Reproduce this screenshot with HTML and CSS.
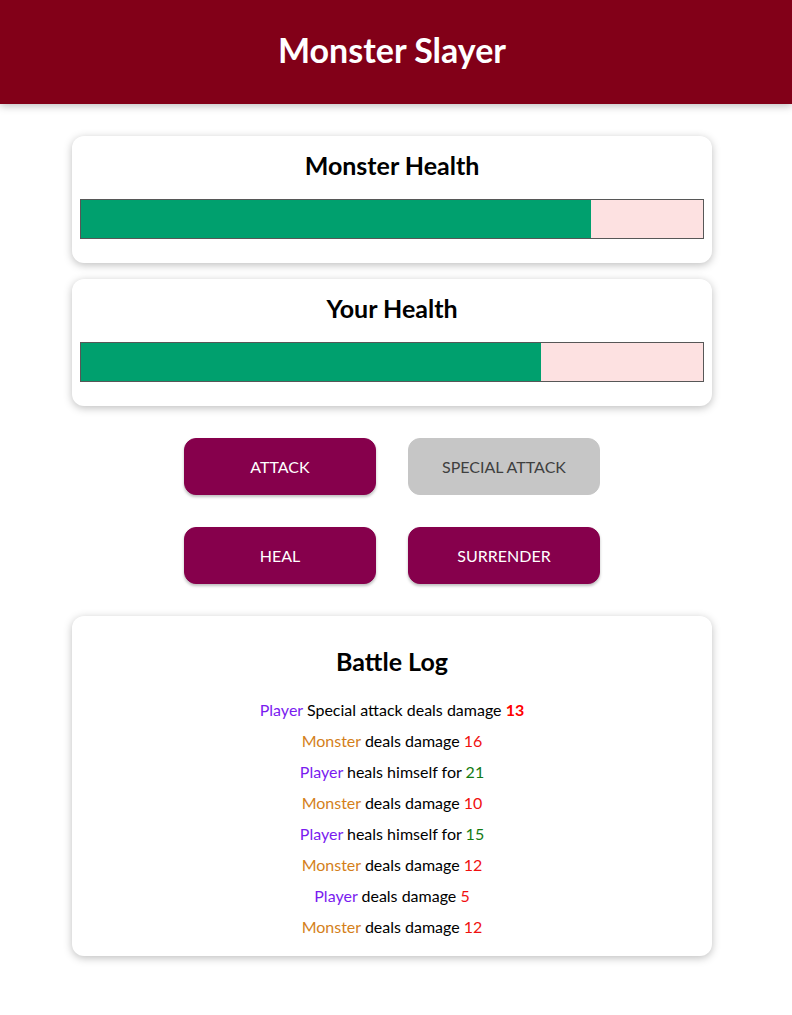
FILE: index.html
```html
<!DOCTYPE html>
<html lang="en">
<head>
<meta charset="utf-8">
<title>Monster Slayer</title>
<link rel="stylesheet" href="styles.css">
</head>
<body>
<header class="app-header">
  <h1 class="app-title">Monster Slayer</h1>
</header>
<main class="app-main">
  <section class="card">
    <h2 class="card-title">Monster Health</h2>
    <div class="healthbar"><div class="healthbar-value" style="width: 82%"></div></div>
  </section>
  <section class="card">
    <h2 class="card-title">Your Health</h2>
    <div class="healthbar"><div class="healthbar-value" style="width: 74%"></div></div>
  </section>
  <section class="controls">
    <button class="btn">ATTACK</button>
    <button class="btn" disabled>SPECIAL ATTACK</button>
    <button class="btn">HEAL</button>
    <button class="btn">SURRENDER</button>
  </section>
  <section class="card log-card">
    <h2 class="card-title log-title">Battle Log</h2>
    <ul class="log">
      <li><span class="log-player">Player</span> Special attack deals damage <span class="log-damage log-strong">13</span></li>
      <li><span class="log-monster">Monster</span> deals damage <span class="log-damage">16</span></li>
      <li><span class="log-player">Player</span> heals himself for <span class="log-heal">21</span></li>
      <li><span class="log-monster">Monster</span> deals damage <span class="log-damage">10</span></li>
      <li><span class="log-player">Player</span> heals himself for <span class="log-heal">15</span></li>
      <li><span class="log-monster">Monster</span> deals damage <span class="log-damage">12</span></li>
      <li><span class="log-player">Player</span> deals damage <span class="log-damage">5</span></li>
      <li><span class="log-monster">Monster</span> deals damage <span class="log-damage">12</span></li>
    </ul>
  </section>
</main>
</body>
</html>
```

FILE: styles.css
```css
* { box-sizing: border-box; }

html { font-family: "Lato", "Noto Sans", sans-serif; }

body {
  margin: 0;
  font-size: 16px;
  color: #000;
  background: #fff;
}

.app-header {
  background: #820018;
  color: #fff;
  text-align: center;
  padding: 30px 8px 34px 0;
  box-shadow: 0 2px 8px rgba(0, 0, 0, 0.26);
  margin-bottom: 32px;
}

.app-title {
  margin: 0;
  font-size: 34px;
  line-height: 40px;
  font-weight: 700;
}

.app-main {
  padding-right: 8px;
}

.card {
  width: 640px;
  margin: 16px auto;
  padding: 8px;
  border-radius: 12px;
  background: #fff;
  box-shadow: 0 2px 8px rgba(0, 0, 0, 0.26);
  text-align: center;
}

.card-title {
  margin: 7px 0 20px;
  font-size: 25px;
  line-height: 28px;
  font-weight: 700;
}

.healthbar {
  height: 40px;
  border: 1px solid #575757;
  background: #fde1e1;
  margin-bottom: 16px;
}

.healthbar-value {
  height: 100%;
  background: #00a06e;
}

.controls {
  width: 640px;
  margin: 0 auto;
  display: flex;
  flex-wrap: wrap;
  justify-content: center;
}

.btn {
  font: inherit;
  width: 192px;
  margin: 16px;
  padding: 16px;
  line-height: 23px;
  border: 1px solid #86004c;
  background: #86004c;
  color: #fff;
  border-radius: 12px;
  box-shadow: 0 2px 3px rgba(0, 0, 0, 0.26);
  cursor: pointer;
}

.btn:disabled {
  background: #c6c6c6;
  border-color: #c6c6c6;
  color: #3f3f3f;
  box-shadow: none;
  cursor: not-allowed;
}

.log-title { margin: 23px 0 23px; }

.log {
  list-style: none;
  margin: 0;
  padding: 0 0 2px;
}

.log li {
  margin: 8px 0;
  line-height: 23px;
}

.log-player { color: #7a1cf0; }
.log-monster { color: #d47f1a; }
.log-damage { color: #f01010; }
.log-heal { color: #127a12; }
.log-strong { font-weight: 700; color: #ff0000; }
```
